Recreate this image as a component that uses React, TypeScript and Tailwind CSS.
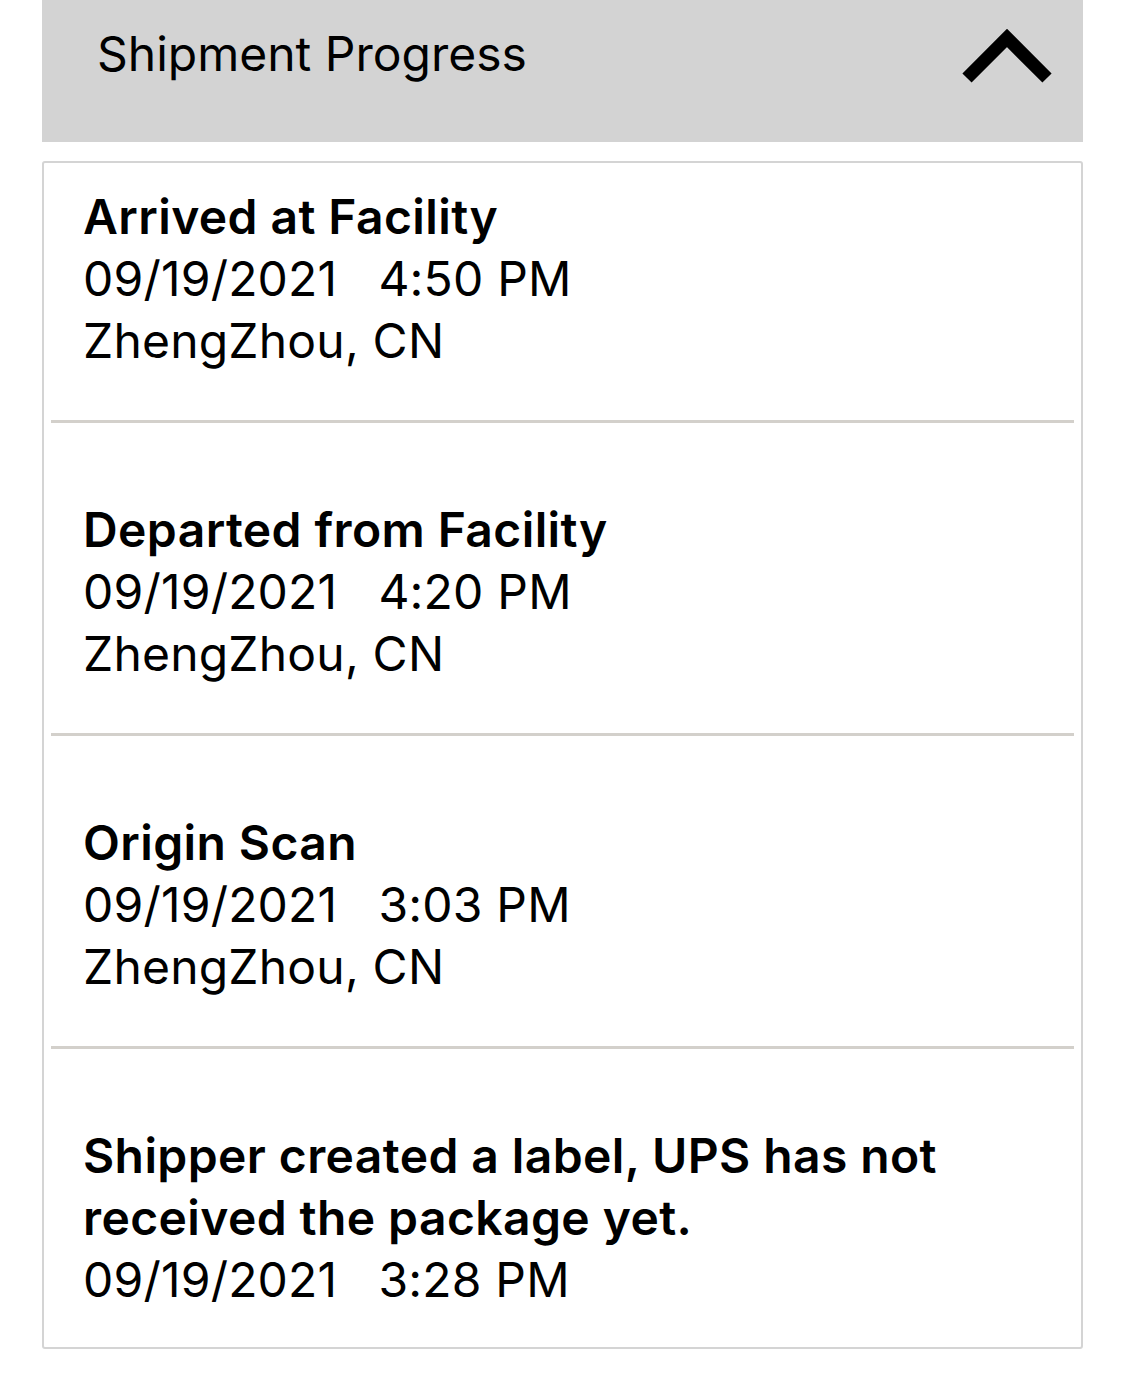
const events = [
  { title: "Arrived at Facility", date: "09/19/2021", time: "4:50 PM", place: "ZhengZhou, CN" },
  { title: "Departed from Facility", date: "09/19/2021", time: "4:20 PM", place: "ZhengZhou, CN" },
  { title: "Origin Scan", date: "09/19/2021", time: "3:03 PM", place: "ZhengZhou, CN" },
  { title: "Shipper created a label, UPS has not received the package yet.", date: "09/19/2021", time: "3:28 PM" },
];

export default function App() {
  return (
    <div className="min-h-[1380px] bg-white px-[42px] font-['Inter',sans-serif] text-black">
      <div className="h-[142px] bg-[#d3d3d3] pl-[55px] pr-[30px] flex items-start justify-between">
        <span className="mt-[22px] text-[48px] leading-[64px] font-normal">Shipment Progress</span>
        <svg width="92" height="60" viewBox="0 0 92 60" className="mt-[26px]">
          <path d="M6 52 L46 12 L86 52" fill="none" stroke="black" strokeWidth="13" />
        </svg>
      </div>
      <div className="mt-[19px] border-2 border-[#d4d4d4] rounded-[3px] pb-[36px]">
        {events.map((e, i) => (
          <div key={i}>
            {i > 0 && <div className="mx-[7px] h-[3px] bg-[#d3d0cb]" />}
            <div className={`pl-[39px] pr-[30px] text-[48px] leading-[62px] tracking-[0.2px] ${i === 0 ? "pt-[23px]" : "pt-[76px]"} ${i < events.length - 1 ? "pb-[48px]" : ""}`}>
              <div className="font-semibold tracking-[0.4px]">{e.title}</div>
              <div className="whitespace-pre">{e.date + "   " + e.time}</div>
              {e.place && <div>{e.place}</div>}
            </div>
          </div>
        ))}
      </div>
    </div>
  );
}
